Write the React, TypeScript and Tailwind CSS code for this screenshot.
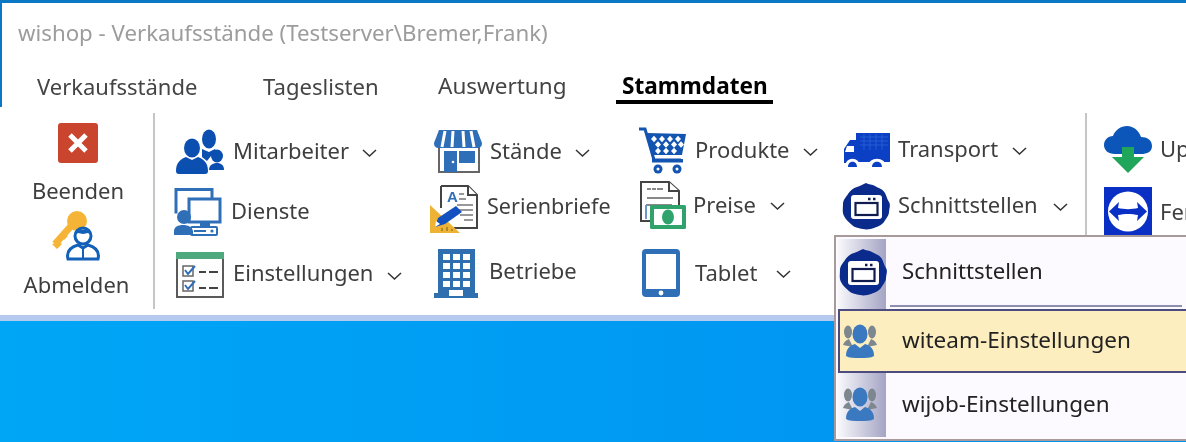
import React from "react";

const Svg = ({ w, h, children }: { w: number; h: number; children: React.ReactNode }) => (
  <svg width={w} height={h} viewBox={`0 0 ${w} ${h}`} className="shrink-0 block">{children}</svg>
);

const CloseIcon = () => (
  <Svg w={40} h={40}>
    <rect width={40} height={40} rx={3} fill="#c9452e" />
    <path d="M12 12L28 28M28 12L12 28" stroke="#fff" strokeWidth={5} />
  </Svg>
);
const KeyUser = () => (
  <Svg w={50} h={50}>
    <circle cx={26} cy={10} r={10} fill="#f6b436" />
    <path d="M21 14L4 33" stroke="#f6b436" strokeWidth={7} />
    <path d="M1 33l5 5 5-5-3-2zM9 25l4 4 4-4-3-3z" fill="#f6b436" />
    <circle cx={32} cy={25} r={8} fill="#fff" stroke="#1260b8" strokeWidth={3} />
    <path d="M24 24c1-7 15-7 16 0l-3-2-5 1-5-1z" fill="#1260b8" />
    <path d="M17 48c-2-8 3-12 10-14l5 3 5-3c7 2 12 6 10 14z" fill="#fff" stroke="#1260b8" strokeWidth={3} />
    <path d="M32 38v10" stroke="#1260b8" strokeWidth={2} />
  </Svg>
);
const Mitarbeiter = () => (
  <Svg w={48} h={45}>
    <ellipse cx={33} cy={10} rx={7} ry={9.5} fill="#0b4fb0" />
    <path d="M26 20l7 3 6-3 3 5-7 2-4 5-5-4z" fill="#0b4fb0" />
    <ellipse cx={16} cy={19} rx={8} ry={9.5} fill="#0b4fb0" />
    <path d="M0 42c0-9 5-12 10-14l6 3 6-3c5 2 10 5 10 14 0 2-1 3-3 3H3c-2 0-3-1-3-3z" fill="#0b4fb0" />
    <ellipse cx={41} cy={27} rx={6} ry={6.5} fill="#0b4fb0" />
    <path d="M33 41c0-5 4-7 8-7s7 2 7 7z" fill="#0b4fb0" />
  </Svg>
);
const Dienste = () => (
  <Svg w={48} h={48}>
    <path d="M38 10V1.5H2v24" stroke="#2f6fb8" strokeWidth={3} fill="none" />
    <rect x={15} y={11} width={31} height={23} fill="#fff" stroke="#2f6fb8" strokeWidth={3} />
    <path d="M26 35h10v3H26z" fill="#2f6fb8" />
    <rect x={17} y={39} width={26} height={8} rx={1} fill="#fff" stroke="#2f6fb8" strokeWidth={2} />
    <path d="M20 43h12" stroke="#2f6fb8" strokeWidth={2} />
    <circle cx={38} cy={43} r={1.6} fill="#2f6fb8" />
    <circle cx={10} cy={29} r={7} fill="#2f6fb8" />
    <path d="M0 47v-4c0-4 4-6 9-6s9 2 10 6v4z" fill="#2f6fb8" />
  </Svg>
);
const Einstellungen = () => (
  <Svg w={48} h={46}>
    <rect x={1} y={1} width={46} height={44} fill="#fff" stroke="#5a5a5a" strokeWidth={2} />
    <rect width={48} height={7} fill="#4fa97f" />
    <rect x={7} y={14} width={10} height={10} fill="none" stroke="#666" strokeWidth={1.5} />
    <rect x={7} y={29} width={10} height={10} fill="none" stroke="#666" strokeWidth={1.5} />
    <path d="M9 18l3 4 7-8M9 33l3 4 7-8" stroke="#2f6fb8" strokeWidth={2} fill="none" />
    <path d="M23 20h7M33 20h9M23 36h7M33 36h9" stroke="#444" strokeWidth={2} />
  </Svg>
);
const Staende = () => (
  <Svg w={48} h={43}>
    <path d="M5 16v26h40V16" fill="#fff" stroke="#666" strokeWidth={2} />
    <path d="M5 0h38l5 13c0 5-4 5-5 5H5c-1 0-5 0-5-5z" fill="#2f6fb8" />
    <path d="M11 1l-3 16M19 1l-1 16M29 1l1 16M37 1l3 16" stroke="#fff" strokeWidth={3} />
    <rect x={10} y={21} width={13} height={21} fill="#2f6fb8" />
    <circle cx={19} cy={32} r={1.3} fill="#fff" />
    <rect x={25} y={21} width={16} height={12} fill="#2f6fb8" />
  </Svg>
);
const Serienbriefe = () => (
  <Svg w={48} h={50}>
    <path d="M11 2h27l9 9v33H24" fill="#fff" stroke="#444" strokeWidth={2} />
    <path d="M11 2v22" stroke="#444" strokeWidth={2} />
    <path d="M38 2v9h9" fill="#fff" stroke="#444" strokeWidth={2} />
    <text x={17} y={18} fontSize={15} fontWeight={700} fill="#2f6fb8" fontFamily="Liberation Sans, sans-serif">A</text>
    <path d="M29 10h5M29 15h7M27 21h16M27 26h16M30 31h13M34 36h9" stroke="#777" strokeWidth={1.5} />
    <path d="M0 21l30 28H0z" fill="#eeb334" />
    <path d="M5 43l3-9L26 22l6 6-17 12z" fill="#1350c0" />
    <path d="M5 43l1-6 4 3z" fill="#fff" />
    <path d="M12 47v-3M17 47v-4M22 47v-2" stroke="#8a6a20" strokeWidth={1.2} />
  </Svg>
);
const Betriebe = () => (
  <Svg w={44} h={49}>
    <path d="M4 0h37v44h3v5H0v-5h4z" fill="#2f6fb0" />
    {[0, 1, 2, 3].map((r) =>
      [0, 1, 2].map((c) => <rect key={`${r}${c}`} x={9 + c * 10} y={5 + r * 9} width={7} height={6} fill="#fff" />)
    )}
    <rect x={15} y={41} width={14} height={6} fill="#fff" />
  </Svg>
);
const Cart = () => (
  <Svg w={48} h={48}>
    <path d="M1 2h6l9 31h27" fill="none" stroke="#1254b0" strokeWidth={3} />
    <path d="M9 6l39 1-4 21H15z" fill="#1254b0" />
    {[
      [16, 12], [24, 12], [32, 12], [40, 12],
      [20, 17.5], [28, 17.5], [36, 17.5], [43, 17.5],
      [20, 24], [28, 24], [36, 24],
    ].map(([x, y], i) => (
      <path key={i} d={`M${x} ${y - 3.2}l3 3.2-3 3.2-3-3.2z`} fill="#fff" />
    ))}
    <rect x={14} y={32} width={31} height={3.5} fill="#1254b0" />
    <circle cx={20} cy={42} r={4.5} fill="#1254b0" />
    <circle cx={39} cy={42} r={4.5} fill="#1254b0" />
    <circle cx={20} cy={42} r={1.5} fill="#fff" />
    <circle cx={39} cy={42} r={1.5} fill="#fff" />
  </Svg>
);
const Preise = () => (
  <Svg w={46} h={48}>
    <path d="M1 1h28l10 9v30H1z" fill="#fff" stroke="#444" strokeWidth={2} />
    <path d="M29 1v9h10" fill="#fff" stroke="#444" strokeWidth={2} />
    <path d="M7 8h4M12 8h4M17 8h6M7 17h26M6 24h26" stroke="#888" strokeWidth={2} />
    <path d="M6 24v14" stroke="#6d97c9" strokeWidth={2} />
    <rect x={10} y={24} width={36} height={24} rx={1.5} fill="#2fa36b" />
    <rect x={14} y={28} width={28} height={16} fill="#fff" />
    <ellipse cx={28} cy={36} rx={6} ry={7.5} fill="#2fa36b" />
  </Svg>
);
const Tablet = () => (
  <Svg w={38} h={48}>
    <rect width={38} height={48} rx={4} fill="#2f6fb8" />
    <rect x={4} y={5} width={30} height={35} fill="#fff" />
    <circle cx={19} cy={44} r={2.4} fill="#fff" />
  </Svg>
);
const Truck = () => (
  <Svg w={48} h={34}>
    <rect x={14} y={0} width={34} height={29} fill="#0b3fc4" />
    <path d="M14 7H8l-6 9v14h12z" fill="#0b3fc4" />
    <path d="M5 13h7v6H3z" fill="#fff" />
    <path d="M18 4h28M18 8h28M18 12h28M22 1v16M28 1v16M34 1v16M40 1v16" stroke="#2f62d8" strokeWidth={0.8} />
    <path d="M3 34c0-11 15-11 15 0zM26 34c0-11 18-11 18 0z" fill="#fff" />
    <path d="M6 34c0-7 9-7 9 0zM30 34c0-7 10-7 10 0z" fill="#0b3fc4" />
  </Svg>
);
const Iface = () => (
  <Svg w={48} h={48}>
    <path d="M24 1c3 2 6 1 9 3s8 3 10 7 2 6 4 9 0 7 0 10-3 7-5 10-7 5-10 6-7 2-11 1-8-1-11-4-6-5-8-9-1-8-1-12 3-7 5-10 5-6 9-7 6-3 9-4z" fill="#0a2a8c" />
    <rect x={9} y={13} width={31} height={24} rx={3} fill="#fff" />
    <rect x={13.5} y={21} width={22} height={12} fill="#fff" stroke="#101c50" strokeWidth={2.2} />
    <path d="M26 17h2.5M31 17h2.5" stroke="#101c50" strokeWidth={2.4} />
  </Svg>
);
const Upload = () => (
  <Svg w={48} h={48}>
    <path d="M11 29C4 29 0 25 0 20s4-9 9-9c2-6 8-10 14-10 7 0 12 5 14 11 6 0 11 3 11 9s-5 8-11 8z" fill="#0b56b8" />
    <path d="M18 22h12v10h10L24 48 8 32h10z" fill="#1fa65a" />
  </Svg>
);
const TeamViewer = () => (
  <Svg w={48} h={49}>
    <rect width={48} height={49} fill="#0a2fc4" />
    <circle cx={24} cy={24.5} r={20} fill="#fff" />
    <path d="M5 24.5L15 15l-1 6c6 1.5 14 1.5 20 0l-1-6 10 9.5L33 34l1-6c-6-1.5-14-1.5-20 0l1 6z" fill="#0a2fc4" />
  </Svg>
);
const TeamIcon = () => (
  <Svg w={34} h={34}>
    <ellipse cx={5} cy={8} rx={4} ry={6.5} fill="#7d8790" />
    <ellipse cx={29} cy={8} rx={4} ry={6.5} fill="#7d8790" />
    <path d="M0 21c1-3 3-5 6-6l4 8zM34 21c-1-3-3-5-6-6l-4 8z" fill="#7d8790" />
    <ellipse cx={17} cy={10} rx={7.5} ry={9.5} fill="#3a78c0" />
    <path d="M3 32c0-7 3-10 9-12l5 4 5-4c6 2 9 5 9 12-3 2-8 2-14 2s-11 0-14-2z" fill="#3a78c0" />
  </Svg>
);

const Chevron = () => (
  <svg width={15} height={8} viewBox="0 0 15 8" className="shrink-0 block">
    <path d="M1 1l6.5 6 6.5-6" fill="none" stroke="#333" strokeWidth={1.5} />
  </svg>
);

const Item = ({ className, icon, text, gap, chevron }: { className: string; icon: React.ReactNode; text: string; gap: string; chevron?: string }) => (
  <div className={`flex items-center whitespace-nowrap ${className}`}>
    {icon}
    <span className={gap}>{text}</span>
    {chevron && <span className={`mt-[2px] ${chevron}`}><Chevron /></span>}
  </div>
);

const Sep = ({ className }: { className: string }) => <div className={`w-[2px] shrink-0 bg-[#c6c6c6] ${className}`} />;

export default function App() {
  return (
    <div className="relative w-[1186px] h-[442px] overflow-hidden flex flex-col bg-[linear-gradient(90deg,#00a6f6,#0090f0)] font-['Noto_Sans',sans-serif] [filter:blur(0.45px)]">
      <div className="h-[107px] shrink-0 bg-white border-t-[3px] border-l-[2px] border-[#0a78c4] flex flex-col">
        <div className="text-[#9c9c9c] text-[22.25px] leading-[30px] pl-[16px] pt-[15px] whitespace-nowrap">wishop - Verkaufsstände (Testserver\Bremer,Frank)</div>
        <div className="flex text-[#444] text-[22px] leading-[30px] pl-[35px] pt-[23px] whitespace-nowrap">
          <span className="w-[226px]">Verkaufsstände</span>
          <span className="w-[175px] text-[22.1px]">Tageslisten</span>
          <span className="w-[184px] text-[22.5px]">Auswertung</span>
          <span className="relative font-bold text-black text-[22.6px]">
            Stammdaten
            <span className="absolute left-[-6px] right-[-5px] top-[29px] h-[4px] bg-black" />
          </span>
        </div>
      </div>

      <div className="h-[208px] shrink-0 bg-white flex text-[#3e3e3e] text-[22px] leading-[30px] overflow-hidden">
        <div className="w-[153px] shrink-0 flex flex-col items-center pt-[16px]">
          <div className="ml-[3px]"><CloseIcon /></div>
          <div className="mt-[12px] ml-[3px]">Beenden</div>
          <div className="mt-[6px] -ml-[1px]"><KeyUser /></div>
          <div className="mt-[8px]">Abmelden</div>
        </div>
        <Sep className="mt-[6px] h-[196px]" />

        <div className="w-[275px] shrink-0 flex flex-col items-start pl-[21px]">
          <Item className="mt-[22px]" icon={<Mitarbeiter />} text="Mitarbeiter" gap="ml-[9px] pb-[4px]" chevron="ml-[13px]" />
          <Item className="mt-[14px] -ml-[2px]" icon={<Dienste />} text="Dienste" gap="ml-[9px] pb-[4px]" />
          <Item className="mt-[16px]" icon={<Einstellungen />} text="Einstellungen" gap="ml-[9px] pb-[6px]" chevron="ml-[14px]" />
        </div>

        <div className="w-[208px] shrink-0 flex flex-col items-start">
          <Item className="mt-[23px] ml-[4px]" icon={<Staende />} text="Stände" gap="ml-[8px] pb-[4px]" chevron="ml-[13px]" />
          <Item className="mt-[11px]" icon={<Serienbriefe />} text="Serienbriefe" gap="ml-[9px] pb-[6px] text-[21.6px]" />
          <Item className="mt-[15px] ml-[4px]" icon={<Betriebe />} text="Betriebe" gap="ml-[11px] pb-[8px]" />
        </div>

        <div className="w-[204px] shrink-0 flex flex-col items-start">
          <Item className="mt-[20px]" icon={<Cart />} text="Produkte" gap="ml-[9px] pb-[4px]" chevron="ml-[13px]" />
          <Item className="mt-[6px] ml-[2px]" icon={<Preise />} text="Preise" gap="ml-[7px] pb-[2px]" chevron="ml-[14px]" />
          <Item className="mt-[20px] ml-[4px]" icon={<Tablet />} text="Tablet" gap="ml-[15px] pb-[2px]" chevron="ml-[19px]" />
        </div>

        <div className="w-[243px] shrink-0 flex flex-col items-start">
          <Item className="mt-[26px]" icon={<Truck />} text="Transport" gap="ml-[8px] pb-[4px]" chevron="ml-[14px]" />
          <Item className="mt-[15px]" icon={<Iface />} text="Schnittstellen" gap="ml-[8px] pb-[4px]" chevron="ml-[15px]" />
        </div>
        <Sep className="mt-[6px] h-[196px]" />

        <div className="flex flex-col items-start pl-[17px]">
          <Item className="mt-[18px]" icon={<Upload />} text="Update" gap="ml-[8px] pb-[2px]" />
          <Item className="mt-[14px]" icon={<TeamViewer />} text="Fernwartung" gap="ml-[8px] pb-[2px]" />
        </div>
      </div>

      <div className="h-[6px] shrink-0 bg-[#b6caf0]" />

      <div className="absolute left-[834px] top-[235px] w-[360px] h-[206px] border-2 border-[#a89a9a] bg-[#fdfaff] flex flex-col p-[2px] text-[#222] text-[22.2px] leading-[30px]">
        <div className="absolute left-[2px] top-[2px] bottom-[2px] w-[48px] bg-[linear-gradient(90deg,#f8f8fc,#a4a4c4)]" />
        <div className="relative h-[66px] shrink-0 flex items-center pl-[1px]">
          <Iface />
          <span className="ml-[15px] pb-[2px]">Schnittstellen</span>
        </div>
        <div className="relative h-[2px] shrink-0 ml-[52px] mr-[8px] bg-[#8e8eae]" />
        <div className="relative h-[64px] shrink-0 mt-[2px] flex items-center bg-[#fdeec0] border-2 border-[#4c4c80] pl-[3px]">
          <TeamIcon />
          <span className="ml-[25px] pb-[2px] text-[22.5px]">witeam-Einstellungen</span>
        </div>
        <div className="relative h-[62px] shrink-0 flex items-center pl-[5px]">
          <TeamIcon />
          <span className="ml-[25px] text-[22.5px]">wijob-Einstellungen</span>
        </div>
      </div>
    </div>
  );
}
